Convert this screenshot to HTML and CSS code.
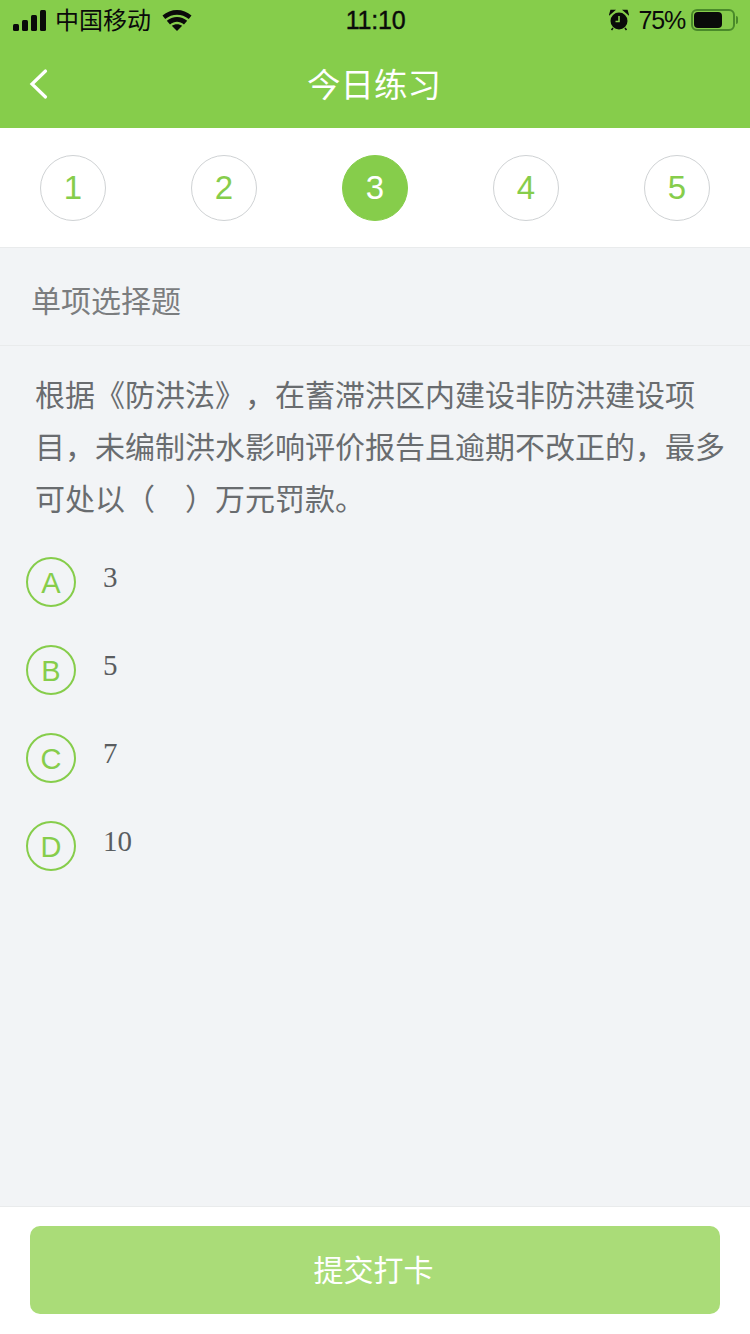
FILE: index.html
```html
<!DOCTYPE html>
<html lang="zh-CN">

<head>
    <meta charset="UTF-8">
    <meta name="viewport" content="width=device-width, initial-scale=1.0">
    <title>今日练习</title>
    <link rel="stylesheet" href="styles.css">
</head>

<body>
    <div class="page">
        <header class="top">
            <div class="status-bar">
                <div class="status-left">
                    <div class="signal"><i></i><i></i><i></i><i></i></div>
                    <span class="carrier">中国移动</span>
                    <svg class="wifi" width="30" height="22" viewBox="0 0 30 22">
                        <path d="M0.500 6.500C8.500 -1 21.500 -1 29.500 6.500L26.800 10C19.800 4.200 10.200 4.200 3.200 10Z" fill="#0a0a0a" />
                        <path d="M4.800 11.800C10.500 6.600 19.500 6.600 25.200 11.800L22 15.400C17.500 11.800 12.500 11.800 8 15.400Z" fill="#0a0a0a" />
                        <path d="M9.800 16.800C12.500 14.600 17.500 14.600 20.200 16.800L15 22Z" fill="#0a0a0a" />
                    </svg>
                </div>
                <div class="status-time">11:10</div>
                <div class="status-right">
                    <svg class="alarm" width="20" height="22" viewBox="0 0 20 22">
                        <circle cx="10" cy="12" r="8.500" fill="#0a0a0a" />
                        <path d="M1 5L5 1.500L2 1.500Z M19 5L15 1.500L18 1.500Z" fill="#0a0a0a" stroke="#0a0a0a" stroke-width="1.500" />
                        <path d="M10 7V12.500H6.500" fill="none" stroke="#86cd4b" stroke-width="1.600" />
                        <path d="M4 19L2.500 21M16 19L17.500 21" stroke="#0a0a0a" stroke-width="1.500" />
                    </svg>
                    <span class="battery-text">75%</span>
                    <div class="battery">
                        <div class="battery-level"></div>
                    </div>
                    <div class="battery-cap"></div>
                </div>
            </div>
            <div class="nav-bar">
                <svg class="back" width="20" height="32" viewBox="0 0 20 32">
                    <path d="M16.500 3L3 16L16.500 29" fill="none" stroke="#ffffff" stroke-width="3.200" stroke-linecap="round" />
                </svg>
                <h1>今日练习</h1>
            </div>
        </header>

        <nav class="steps">
            <div class="step">1</div>
            <div class="step">2</div>
            <div class="step active">3</div>
            <div class="step">4</div>
            <div class="step">5</div>
        </nav>

        <main class="content">
            <div class="q-type">单项选择题</div>
            <p class="question">根据《防洪法》，在蓄滞洪区内建设非防洪建设项目，未编制洪水影响评价报告且逾期不改正的，最多可处以（　）万元罚款。</p>
            <ul class="options">
                <li class="option"><span class="letter">A</span><span class="answer">3</span></li>
                <li class="option"><span class="letter">B</span><span class="answer">5</span></li>
                <li class="option"><span class="letter">C</span><span class="answer">7</span></li>
                <li class="option"><span class="letter">D</span><span class="answer">10</span></li>
            </ul>
        </main>

        <footer class="bottom">
            <button class="submit" type="button">提交打卡</button>
        </footer>
    </div>
</body>

</html>
```

FILE: styles.css
```css
* {
    box-sizing: border-box;
}

html,
body {
    margin: 0;
    padding: 0;
}

body {
    font-family: "Liberation Sans", "Noto Sans CJK SC", sans-serif;
    background-color: #f2f4f6;
    text-spacing-trim: space-all;
}

.page {
    width: 750px;
    height: 1334px;
    display: flex;
    flex-direction: column;
    overflow: hidden;
}

.top {
    height: 128px;
    background-color: #86cd4b;
}

.status-bar {
    height: 40px;
    padding: 0 12px 0 13px;
    display: flex;
    align-items: center;
    justify-content: space-between;
    color: #0a0a0a;
}

.status-left,
.status-right {
    width: 260px;
    display: flex;
    align-items: center;
}

.status-right {
    justify-content: flex-end;
}

.signal {
    display: flex;
    align-items: flex-end;
    gap: 3px;
    height: 21px;
}

.signal i {
    display: block;
    width: 6px;
    border-radius: 1.500px;
    background-color: #0a0a0a;
}

.signal i:nth-child(1) {
    height: 7px;
}

.signal i:nth-child(2) {
    height: 11px;
}

.signal i:nth-child(3) {
    height: 16px;
}

.signal i:nth-child(4) {
    height: 21px;
}

.carrier {
    margin-left: 9px;
    padding-top: 2px;
    font-size: 24px;
    line-height: 28px;
}

.wifi {
    margin-left: 11px;
}

.status-time {
    font-size: 25px;
    letter-spacing: -0.200px;
    -webkit-text-stroke: 0.400px #0a0a0a;
}

.alarm {
    margin-right: 10px;
}

.battery-text {
    margin-right: 6px;
    font-size: 25px;
    letter-spacing: -1.200px;
}

.battery {
    width: 44px;
    height: 22px;
    padding: 1px;
    border: 2px solid #4a8a2a;
    border-radius: 6px;
}

.battery-level {
    width: 28px;
    height: 100%;
    border-radius: 4px;
    background-color: #0a0a0a;
}

.battery-cap {
    width: 2px;
    height: 8px;
    margin-left: 1px;
    border-radius: 0 2px 2px 0;
    background-color: #4a8a2a;
}

.nav-bar {
    height: 88px;
    padding-right: 2px;
    display: flex;
    align-items: center;
    justify-content: center;
    position: relative;
}

.back {
    position: absolute;
    left: 29px;
    top: 28px;
}

.nav-bar h1 {
    margin: 0 0 4px;
    font-size: 33.500px;
    font-weight: 400;
    color: #ffffff;
}

.steps {
    height: 120px;
    padding: 27px 40px 0;
    display: flex;
    justify-content: space-between;
    align-items: flex-start;
    background-color: #ffffff;
    border-bottom: 1px solid #e9ebec;
}

.step {
    width: 66px;
    height: 66px;
    display: flex;
    align-items: center;
    justify-content: center;
    border: 1px solid #cfd2d4;
    border-radius: 50%;
    font-size: 33px;
    color: #86cd4b;
}

.step.active {
    border-color: #86cd4b;
    background-color: #86cd4b;
    color: #ffffff;
}

.content {
    flex: 1;
}

.q-type {
    height: 98px;
    padding: 4px 30px 0 31px;
    display: flex;
    align-items: center;
    font-size: 30px;
    color: #7b7d7f;
    border-bottom: 1px solid #e9ebec;
}

.question {
    margin: 0;
    padding: 24px 20px 0 35px;
    font-size: 30px;
    line-height: 52px;
    color: #696c6f;
}

.options {
    list-style: none;
    margin: 0;
    padding: 31px 0 0 26px;
}

.option {
    height: 88px;
    display: flex;
    align-items: flex-start;
}

.letter {
    width: 50px;
    height: 50px;
    padding-top: 2px;
    display: flex;
    align-items: center;
    justify-content: center;
    border: 2px solid #86cd4b;
    border-radius: 50%;
    font-size: 29px;
    color: #86cd4b;
}

.answer {
    margin-left: 27px;
    font-family: "Liberation Serif", serif;
    font-size: 29px;
    line-height: 40px;
    color: #5a5d60;
}

.bottom {
    height: 128px;
    padding: 19px 30px 0;
    background-color: #ffffff;
    border-top: 1px solid #e9ebec;
}

.submit {
    display: block;
    width: 100%;
    height: 88px;
    padding: 0 3px 4px 0;
    border: none;
    border-radius: 10px;
    font-family: inherit;
    font-size: 30px;
    color: #ffffff;
    background-color: #aadc78;
}
```
